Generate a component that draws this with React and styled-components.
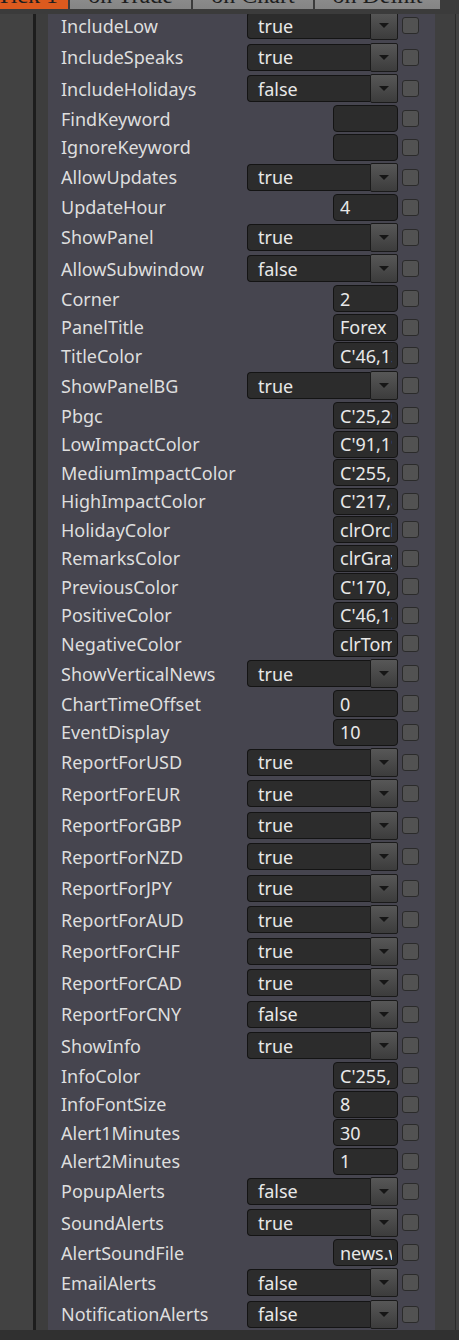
import React from "react";
import styled, { createGlobalStyle } from "styled-components";

const GlobalStyle = createGlobalStyle`
  body {
    margin: 0;
    background: #424242;
    font-family: "Noto Sans", "Open Sans", sans-serif;
  }
`;

const SELECT = "select";
const INPUT = "input";

const inputs = [
  ["IncludeLow", SELECT, "true"],
  ["IncludeSpeaks", SELECT, "true"],
  ["IncludeHolidays", SELECT, "false"],
  ["FindKeyword", INPUT, ""],
  ["IgnoreKeyword", INPUT, ""],
  ["AllowUpdates", SELECT, "true"],
  ["UpdateHour", INPUT, "4"],
  ["ShowPanel", SELECT, "true"],
  ["AllowSubwindow", SELECT, "false"],
  ["Corner", INPUT, "2"],
  ["PanelTitle", INPUT, "Forex News"],
  ["TitleColor", INPUT, "C'46,139,87'"],
  ["ShowPanelBG", SELECT, "true"],
  ["Pbgc", INPUT, "C'25,202,108'"],
  ["LowImpactColor", INPUT, "C'91,192,222'"],
  ["MediumImpactColor", INPUT, "C'255,185,83'"],
  ["HighImpactColor", INPUT, "C'217,83,79'"],
  ["HolidayColor", INPUT, "clrOrchid"],
  ["RemarksColor", INPUT, "clrGray"],
  ["PreviousColor", INPUT, "C'170,170,170'"],
  ["PositiveColor", INPUT, "C'46,184,46'"],
  ["NegativeColor", INPUT, "clrTomato"],
  ["ShowVerticalNews", SELECT, "true"],
  ["ChartTimeOffset", INPUT, "0"],
  ["EventDisplay", INPUT, "10"],
  ["ReportForUSD", SELECT, "true"],
  ["ReportForEUR", SELECT, "true"],
  ["ReportForGBP", SELECT, "true"],
  ["ReportForNZD", SELECT, "true"],
  ["ReportForJPY", SELECT, "true"],
  ["ReportForAUD", SELECT, "true"],
  ["ReportForCHF", SELECT, "true"],
  ["ReportForCAD", SELECT, "true"],
  ["ReportForCNY", SELECT, "false"],
  ["ShowInfo", SELECT, "true"],
  ["InfoColor", INPUT, "C'255,112,112'"],
  ["InfoFontSize", INPUT, "8"],
  ["Alert1Minutes", INPUT, "30"],
  ["Alert2Minutes", INPUT, "1"],
  ["PopupAlerts", SELECT, "false"],
  ["SoundAlerts", SELECT, "true"],
  ["AlertSoundFile", INPUT, "news.wav"],
  ["EmailAlerts", SELECT, "false"],
  ["NotificationAlerts", SELECT, "false"]
];

const tabs = [
  { label: "Tick 1", width: 68, active: true },
  { label: "on Trade", width: 121 },
  { label: "on Chart", width: 120 },
  { label: "on Deinit", width: 125 }
];

const Page = styled.div`
  display: flex;
  flex-direction: column;
  height: 1340px;
  overflow: hidden;
`;

const TabBar = styled.div`
  display: flex;
  align-items: flex-end;
  height: 14px;
  padding-bottom: 5px;
  box-sizing: border-box;
  overflow: hidden;
  background: #3b3b3b;
`;

const Tab = styled.div`
  flex: none;
  width: ${p => p.width}px;
  height: 34px;
  margin-right: 2px;
  display: flex;
  align-items: flex-end;
  justify-content: ${p => (p.active ? "flex-end" : "center")};
  padding-right: ${p => (p.active ? "10px" : "0")};
  box-sizing: border-box;
  background: ${p => (p.active ? "#dc5a1e" : "linear-gradient(#9a9a9a, #858585)")};
  color: #1e1e1e;
  font-family: "Liberation Serif", serif;
  font-size: 24px;
  line-height: 28px;
  white-space: nowrap;
`;

const Body = styled.div`
  flex: 1;
  display: flex;
  min-height: 0;
`;

const LeftGutter = styled.div`
  width: 33px;
  background: #424242;
`;

const Divider = styled.div`
  width: 3px;
  background: #1d1d1d;
`;

const Strip = styled.div`
  width: 12px;
  background: #3d3d3d;
`;

const Panel = styled.div`
  width: 387px;
  background: #46454f;
  overflow: hidden;
`;

const List = styled.div`
  margin-top: -4px;
`;

const RightGutter = styled.div`
  flex: 1;
  background: #3f3f3f;
  border-right: 1px solid #2a2a2a;
  margin-right: 3px;
`;

const Row = styled.div`
  height: ${p => (p.kind === SELECT ? 31.5 : 28.5)}px;
  display: flex;
  align-items: center;
  padding: 0 16px 0 13px;
`;

const Label = styled.div`
  flex: 1;
  color: #dedede;
  font-size: 18px;
  white-space: nowrap;
`;

const SelectWrap = styled.div`
  display: flex;
  align-items: center;
  width: 151px;
`;

const SelectBox = styled.div`
  flex: 1;
  height: 27px;
  box-sizing: border-box;
  padding-left: 10px;
  display: flex;
  align-items: center;
  background: #2c2c2c;
  border: 1px solid #141414;
  border-right: none;
  border-radius: 4px 0 0 4px;
  color: #e8e8e8;
  font-size: 18px;
`;

const DropButton = styled.div`
  width: 28px;
  height: 29px;
  box-sizing: border-box;
  display: flex;
  align-items: center;
  justify-content: center;
  background: linear-gradient(#575757, #3c3c3c);
  border: 1px solid #1a1a1a;
  border-radius: 2px;

  &::after {
    content: "";
    border-left: 5px solid transparent;
    border-right: 5px solid transparent;
    border-top: 5px solid #161616;
  }
`;

const InputBox = styled.div`
  width: 65px;
  height: 27px;
  box-sizing: border-box;
  padding: 0 5px 0 6px;
  display: flex;
  align-items: center;
  background: #2c2c2c;
  border: 1px solid #141414;
  border-radius: 4px;
  color: #e8e8e8;
  font-size: 18px;
`;

const InputText = styled.span`
  flex: 1;
  overflow: hidden;
  white-space: nowrap;
`;

const Check = styled.div`
  width: 17px;
  height: 17px;
  box-sizing: border-box;
  margin-left: 4px;
  background: #525252;
  border: 1px solid #2b2b2b;
  border-radius: 3px;
`;

const Footer = styled.div`
  height: 10px;
  background: #303030;
`;

const Field = ({ kind, value }) =>
  kind === SELECT ? (
    <SelectWrap>
      <SelectBox>{value}</SelectBox>
      <DropButton />
    </SelectWrap>
  ) : (
    <InputBox>
      <InputText>{value}</InputText>
    </InputBox>
  );

const App = () => (
  <Page>
    <GlobalStyle />
    <TabBar>
      {tabs.map(t => (
        <Tab key={t.label} width={t.width} active={t.active}>
          {t.label}
        </Tab>
      ))}
    </TabBar>
    <Body>
      <LeftGutter />
      <Divider />
      <Strip />
      <Panel>
        <List>
          {inputs.map(([name, kind, value]) => (
            <Row key={name} kind={kind}>
              <Label>{name}</Label>
              <Field kind={kind} value={value} />
              <Check />
            </Row>
          ))}
        </List>
      </Panel>
      <RightGutter />
    </Body>
    <Footer />
  </Page>
);

export default App;
